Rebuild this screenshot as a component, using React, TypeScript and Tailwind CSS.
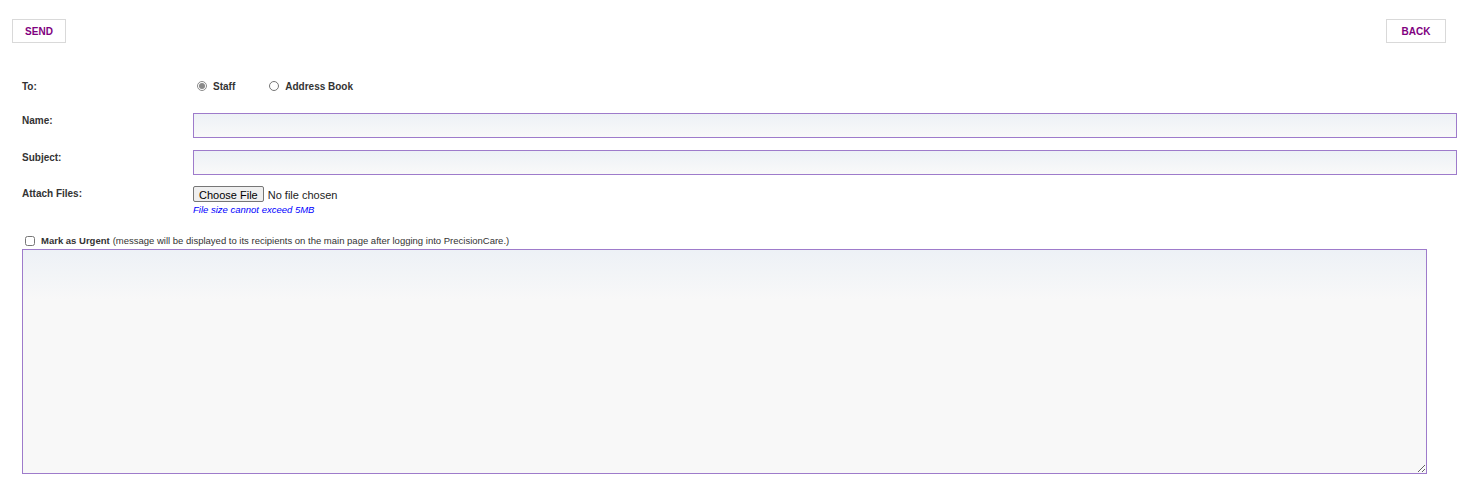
import { useState } from 'react'

const LABEL = 'w-[171px] shrink-0 text-[10px] font-bold text-[#333]'
const FIELD =
  'h-[25px] flex-1 border border-[#9e7bcb] bg-gradient-to-b from-[#edf1f6] to-[#f9f9f9] px-1 text-[12px] outline-none'

export default function App() {
  const [to, setTo] = useState('staff')

  return (
    <div className="min-h-[486px] bg-white font-['Liberation_Sans',Arial,sans-serif] text-[#333]">
      <div className="flex justify-between pt-[19px] pl-[12px] pr-[26px]">
        <button className="h-[24px] w-[54px] border border-[#d9d9d9] bg-white text-[10px] font-bold text-[#800080]">
          SEND
        </button>
        <button className="h-[24px] w-[60px] border border-[#d9d9d9] bg-white text-[10px] font-bold text-[#800080]">
          BACK
        </button>
      </div>

      <form className="pl-[22px] pr-[15px]">
        <div className="mt-[35px] flex h-[16px] items-center">
          <div className={LABEL}>To:</div>
          <label className="ml-[4px] flex items-center text-[10px] font-bold">
            <input
              type="radio"
              name="to"
              checked={to === 'staff'}
              onChange={() => setTo('staff')}
              className="m-0 h-[10px] w-[10px] accent-[#8a8a8a]"
            />
            <span className="ml-[6px]">Staff</span>
          </label>
          <label className="ml-[34px] flex items-center text-[10px] font-bold">
            <input
              type="radio"
              name="to"
              checked={to === 'book'}
              onChange={() => setTo('book')}
              className="m-0 h-[10px] w-[10px] accent-[#8a8a8a]"
            />
            <span className="ml-[6px]">Address Book</span>
          </label>
        </div>

        <div className="mt-[19px] flex items-start">
          <div className={LABEL}>Name:</div>
          <input type="text" className={FIELD} />
        </div>

        <div className="mt-[12px] flex items-start">
          <div className={LABEL}>Subject:</div>
          <input type="text" className={FIELD} />
        </div>

        <div className="mt-[11px] flex items-start">
          <div className={LABEL}>Attach Files:</div>
          <div className="flex flex-col">
            <input
              type="file"
              className="text-[11px] text-[#222] file:mr-[4px] file:h-[16px] file:rounded-[2px] file:border file:border-[#767676] file:bg-[#efefef] file:px-[5px] file:py-0 file:text-[11px] file:text-black"
            />
            <span className="text-[9.5px] italic leading-[11px] text-[#0000ff]">
              File size cannot exceed 5MB
            </span>
          </div>
        </div>

        <div className="mt-[21px] flex h-[11px] items-center pl-[3px] text-[9.5px]">
          <input type="checkbox" className="m-0 h-[10px] w-[10px]" />
          <span className="ml-[6px] font-bold">Mark as Urgent</span>
          <span className="ml-[3px]">
            (message will be displayed to its recipients on the main page after logging into PrecisionCare.)
          </span>
        </div>

        <textarea className="mt-[2px] block h-[225px] w-[1405px] border border-[#9e7bcb] bg-[linear-gradient(to_bottom,#edf1f6_0px,#f8f8f8_50px)] p-1 text-[12px] outline-none" />
      </form>
    </div>
  )
}
